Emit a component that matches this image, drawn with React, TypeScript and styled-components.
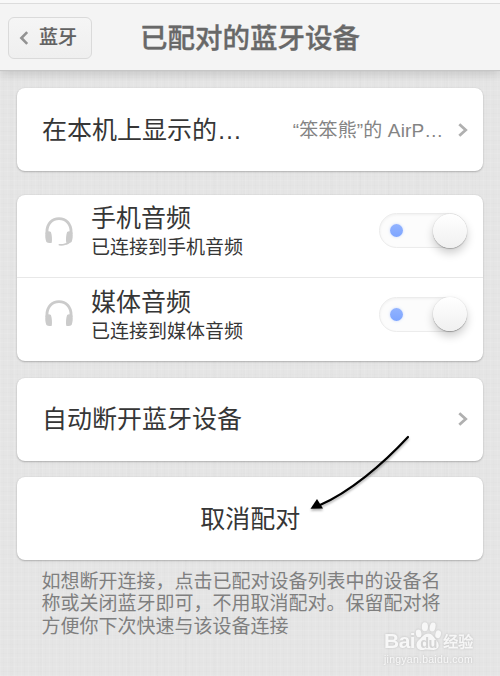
import React from 'react';
import styled, { createGlobalStyle } from 'styled-components';

const GlobalStyle = createGlobalStyle`
  * { box-sizing: border-box; }
  body {
    margin: 0;
    font-family: "Liberation Sans", "Noto Sans CJK SC", sans-serif;
    color: #363636;
  }
  button { font-family: inherit; }
`;

const Screen = styled.div`
  position: relative;
  width: 500px;
  height: 676px;
  overflow: hidden;
  background-color: #e5e5e5;
  background-image:
    repeating-linear-gradient(90deg, rgba(255,255,255,.09) 0 1px, transparent 1px 3px, rgba(0,0,0,.006) 3px 4px, transparent 4px 7px),
    repeating-linear-gradient(0deg, rgba(255,255,255,.09) 0 1px, transparent 1px 4px, rgba(0,0,0,.006) 4px 5px, transparent 5px 9px),
    repeating-linear-gradient(90deg, transparent 0 11px, rgba(0,0,0,.006) 11px 13px, transparent 13px 29px);
`;

const Header = styled.header`
  display: grid;
  grid-template-columns: 84px 1fr 84px;
  align-items: center;
  height: 71px;
  padding: 5px 8px 0;
  background: linear-gradient(#f8f8f8 0 3px, #dcdcdc 3px 4px, #f4f4f4 4px);
  border-bottom: 1px solid #c6c6c6;
  box-shadow: 0 1px 11px rgba(0, 0, 0, .2);
`;

const BackButton = styled.button`
  display: flex;
  align-items: center;
  gap: 10px;
  height: 42px;
  margin-top: 1px;
  padding: 0 0 0 10px;
  border: 1px solid #dadada;
  border-radius: 6px;
  background: linear-gradient(#f5f5f5, #efefef);
  color: #626262;
  font-size: 19px;
  font-weight: 500;
  line-height: 40px;
  -webkit-text-stroke: .2px #626262;
`;

const Title = styled.h1`
  margin: 0;
  padding-top: 3px;
  text-align: center;
  color: #686868;
  font-size: 27.5px;
  font-weight: 500;
  line-height: 40px;
  white-space: nowrap;
  -webkit-text-stroke: .35px #686868;
`;

const List = styled.main`
  display: flex;
  flex-direction: column;
  padding: 17px 17px 0 16.5px;
`;

const Card = styled.section<{ $gap: number }>`
  margin-bottom: ${({ $gap }) => $gap}px;
  border-radius: 8px;
  background: #fff;
  box-shadow: 0 1px 2px rgba(0, 0, 0, .23), 0 0 2px rgba(0, 0, 0, .07);
`;

const Row = styled.div<{ $kind?: 'center' | 'profile' }>`
  display: flex;
  align-items: center;
  justify-content: ${({ $kind }) => ($kind === 'center' ? 'center' : 'flex-start')};
  height: ${({ $kind }) => ($kind === 'profile' ? 82 : 83)}px;
  padding: ${({ $kind }) => ($kind === 'center' ? '0 0 0 1px' : '0 15.5px 0 25.5px')};
  & + & {
    height: 84px;
    border-top: 1px solid #e8e8e8;
  }
`;

const Label = styled.span`
  font-size: 25px;
  line-height: 36px;
  white-space: nowrap;
`;

const Value = styled.span`
  margin: 2px 0 0 auto;
  color: #848484;
  font-size: 19px;
  line-height: 28px;
  letter-spacing: .15px;
  white-space: nowrap;
`;

const Chevron = styled.svg<{ $push?: boolean }>`
  flex: none;
  margin-left: ${({ $push }) => ($push ? 'auto' : '14px')};
`;

const DeviceIcon = styled.svg`
  flex: none;
  width: 34px;
  height: 34px;
  margin-top: -11px;
`;

const TextStack = styled.div`
  display: flex;
  flex-direction: column;
  margin: -7px 0 0 15px;
`;

const Primary = styled.span`
  font-size: 25px;
  line-height: 31px;
`;

const Secondary = styled.span`
  font-size: 19px;
  line-height: 28px;
`;

const Track = styled.div`
  display: flex;
  align-items: center;
  justify-content: space-between;
  width: 88px;
  height: 35px;
  margin: -11px 1px 0 auto;
  padding-left: 10px;
  border: 1px solid #ececec;
  border-radius: 18px;
  background: #fcfcfc;
  box-shadow: inset 0 1px 3px rgba(0, 0, 0, .05);
`;

const Dot = styled.span`
  width: 13px;
  height: 13px;
  border-radius: 50%;
  background: linear-gradient(#92b3ff, #7da5ff);
  box-shadow: 0 0 3px rgba(125, 165, 255, .4);
`;

const Knob = styled.span`
  width: 34px;
  height: 34px;
  margin-right: -1px;
  border-radius: 50%;
  background: linear-gradient(#fff, #f0f0f0);
  box-shadow: 0 1px 1px rgba(0, 0, 0, .22), 0 5px 10px rgba(0, 0, 0, .2), 0 0 1px rgba(0, 0, 0, .22);
`;

const Note = styled.p`
  width: 420px;
  margin: 0 0 0 25px;
  color: #7f7f7f;
  font-size: 19px;
  line-height: 22.4px;
  white-space: nowrap;
`;

const Arrow = styled.svg`
  position: absolute;
  left: 300px;
  top: 426px;
  filter: drop-shadow(0 2px 1px rgba(0, 0, 0, .3));
`;

const Watermark = styled.div`
  position: absolute;
  left: 384px;
  top: 621px;
  width: 92px;
  color: #f7f7f7;
  filter: drop-shadow(0 0 1px rgba(0, 0, 0, .17));
`;

const Brand = styled.div`
  display: flex;
  align-items: flex-end;
  height: 32px;
  font-size: 21px;
  font-weight: 700;
  line-height: 25px;
  letter-spacing: -.5px;
`;

const BrandCjk = styled.span`
  margin: 0 0 -1px 1px;
  font-size: 15px;
  font-weight: 500;
  letter-spacing: 0;
  -webkit-text-stroke: .3px #f7f7f7;
`;

const Site = styled.div`
  font-size: 10.5px;
  line-height: 12px;
  letter-spacing: .25px;
  white-space: nowrap;
`;

const Paw = styled.svg`
  flex: none;
  margin-bottom: 2px;
`;

const RightArrow = ({ push }: { push?: boolean }) => (
  <Chevron $push={push} width="10" height="16" viewBox="0 0 10 16" fill="none">
    <path d="M1.3 2.2 7.7 8l-6.4 5.8" stroke="#b0b0b0" strokeWidth="2.8" />
  </Chevron>
);

const Headphones = ({ mic }: { mic?: boolean }) => (
  <DeviceIcon viewBox="0 0 34 34" fill="none">
    <path d="M4.9 20v-2C4.9 10 10 4.6 17 4.6S29.1 10 29.1 18v2" stroke="#cbcbcb" strokeWidth="2.8" />
    <path
      d="M3.6 18.4c1.6-1.3 4.2-1.5 5.3-.3 1.1 3 1.3 7.3.9 10.6-1.8.6-4.1.5-5.4-.6-1.1-3-1.5-6.5-.8-9.7Zm26.8 0c-1.6-1.3-4.2-1.5-5.3-.3-1.1 3-1.3 7.3-.9 10.6 1.8.6 4.1.5 5.4-.6 1.1-3 1.5-6.5.8-9.7Z"
      fill="#cbcbcb"
    />
    {mic && <path d="M28 27c-1.2 2.2-3 3-5.2 3.2-1.8.9-3.8.8-5.5.6" stroke="#cbcbcb" strokeWidth="1.6" strokeLinecap="round" />}
  </DeviceIcon>
);

const Switch = () => (
  <Track role="switch" aria-checked>
    <Dot />
    <Knob />
  </Track>
);

const profiles = [
  { name: '手机音频', status: '已连接到手机音频', mic: true },
  { name: '媒体音频', status: '已连接到媒体音频', mic: false },
];

export default function App() {
  return (
    <>
      <GlobalStyle />
      <Screen>
        <Header>
          <BackButton>
            <svg width="10" height="14" viewBox="0 0 10 14" fill="none">
              <path d="M8.2 1.2 2.4 7l5.8 5.8" stroke="#929292" strokeWidth="2.6" />
            </svg>
            蓝牙
          </BackButton>
          <Title>已配对的蓝牙设备</Title>
        </Header>
        <List>
          <Card $gap={24}>
            <Row>
              <Label>在本机上显示的…</Label>
              <Value>“笨笨熊”的 AirP…</Value>
              <RightArrow />
            </Row>
          </Card>
          <Card $gap={16.5}>
            {profiles.map((p) => (
              <Row key={p.name} $kind="profile">
                <Headphones mic={p.mic} />
                <TextStack>
                  <Primary>{p.name}</Primary>
                  <Secondary>{p.status}</Secondary>
                </TextStack>
                <Switch />
              </Row>
            ))}
          </Card>
          <Card $gap={16.5}>
            <Row>
              <Label>自动断开蓝牙设备</Label>
              <RightArrow push />
            </Row>
          </Card>
          <Card $gap={11}>
            <Row $kind="center">
              <Label>取消配对</Label>
            </Row>
          </Card>
          <Note>
            如想断开连接，点击已配对设备列表中的设备名
            <br />
            称或关闭蓝牙即可，不用取消配对。保留配对将
            <br />
            方便你下次快速与该设备连接
          </Note>
        </List>
        <Arrow width="120" height="96" viewBox="0 0 120 96">
          <path d="M108 11C83 38 50 66 19 79.5" fill="none" stroke="#000" strokeWidth="2.2" strokeLinecap="round" />
          <path d="m10.5 82.8 6.5-9.8 6 9.6Z" fill="#000" />
        </Arrow>
        <Watermark>
          <Brand>
            Bai
            <Paw width="27" height="30" viewBox="0 0 26 29">
              <g fill="#f7f7f7">
                <ellipse cx="3.5" cy="12" rx="2.7" ry="3.8" transform="rotate(-10 3.5 12)" />
                <ellipse cx="9.5" cy="5.5" rx="3" ry="4.4" />
                <ellipse cx="17" cy="5.8" rx="2.8" ry="4.4" transform="rotate(12 17 5.8)" />
                <ellipse cx="22.3" cy="12.8" rx="2.7" ry="3.8" transform="rotate(15 22.3 12.8)" />
                <path d="M13 12c4 0 5 4 8 7 4 5 1 9-3 9-3 0-7-.8-10 0C3 29-1 24 3 19c4-3 5-7 10-7Z" />
              </g>
              <text x="5" y="26" fontSize="14" fontWeight="700" fill="#d4d4d4">du</text>
            </Paw>
            <BrandCjk>经验</BrandCjk>
          </Brand>
          <Site>jingyan.baidu.com</Site>
        </Watermark>
      </Screen>
    </>
  );
}
